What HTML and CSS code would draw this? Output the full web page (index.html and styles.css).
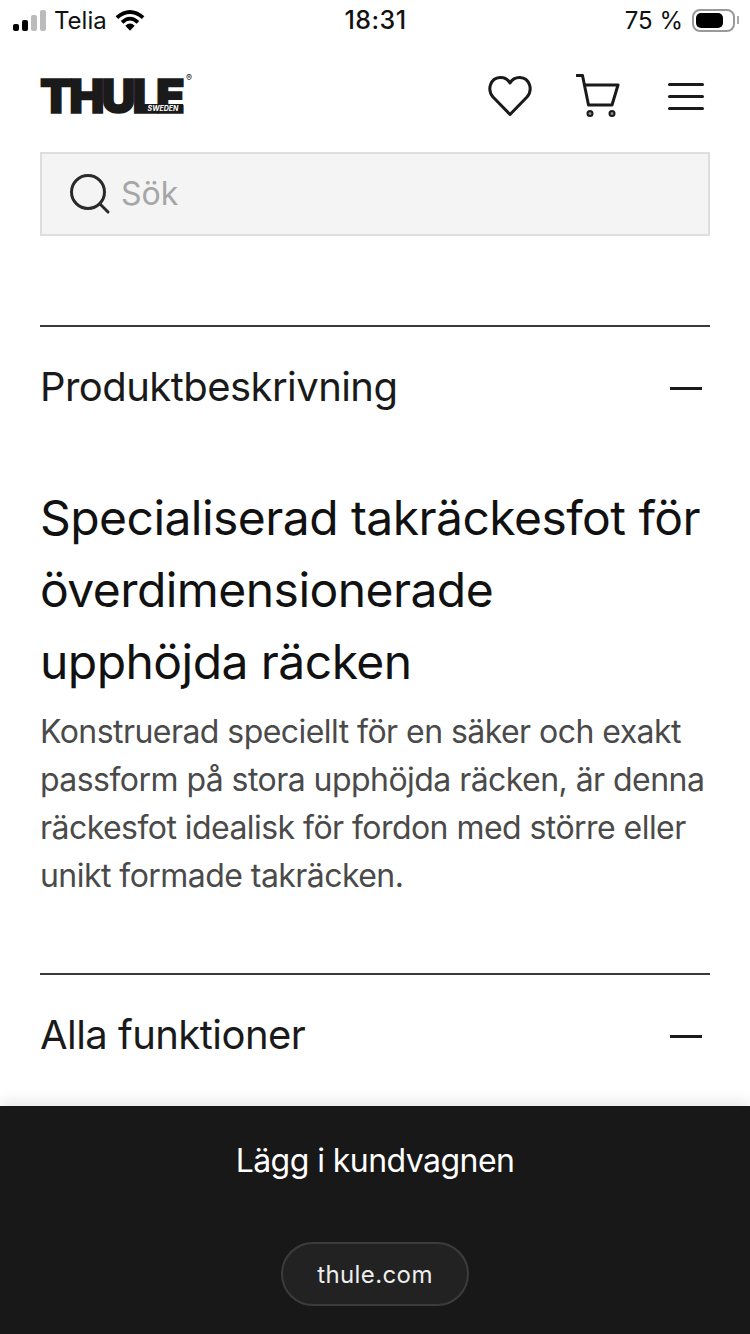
FILE: index.html
```html
<!DOCTYPE html>
<html lang="sv">
<head>
    <meta charset="UTF-8">
    <meta name="viewport" content="width=device-width, initial-scale=1.0">
    <title>Thule</title>
    <link rel="stylesheet" href="styles.css">
</head>
<body>
    <div class="status-bar">
        <div class="status-left">
            <svg class="signal" width="34" height="22" viewBox="0 0 34 22">
                <rect x="0" y="14" width="6" height="7" rx="2" fill="#000"/>
                <rect x="9" y="10" width="6" height="11" rx="2" fill="#000"/>
                <rect x="18" y="5" width="6" height="16" rx="2" fill="#bbb"/>
                <rect x="27" y="0" width="6" height="21" rx="2" fill="#bbb"/>
            </svg>
            <span class="carrier">Telia</span>
            <svg class="wifi" width="30" height="23" viewBox="0 0 32 24">
                <path d="M2 9 Q16 -3 30 9" fill="none" stroke="#000" stroke-width="4"/>
                <path d="M7.5 14 Q16 6 24.5 14" fill="none" stroke="#000" stroke-width="4"/>
                <path d="M11 17.5 Q16 13 21 17.5 L16 23 Z" fill="#000"/>
            </svg>
        </div>
        <div class="status-time">18:31</div>
        <div class="status-right">
            <span class="battery-text">75 %</span>
            <div class="battery"><div class="battery-level"></div></div>
            <div class="battery-cap"></div>
        </div>
    </div>

    <header class="site-header">
        <div class="logo">
            <span class="logo-word">THULE</span>
            <span class="logo-sub">SWEDEN</span>
            <span class="logo-reg">®</span>
        </div>
        <div class="header-icons">
            <svg class="icon-heart" width="44" height="42" viewBox="0 0 44 42">
                <path d="M22 39.500 L5 22 C-1 15 2 3 12 2.500 C16.500 2.300 20 4.500 22 8 C24 4.500 27.500 2.300 32 2.500 C42 3 45 15 39 22 Z" fill="none" stroke="#1a1a1a" stroke-width="3" stroke-linejoin="round"/>
            </svg>
            <svg class="icon-cart" width="44" height="44" viewBox="0 0 44 44">
                <path d="M1 1.500 H6.500 L12.500 31 H36 L42 11 H8.500" fill="none" stroke="#1a1a1a" stroke-width="3" stroke-linejoin="round" stroke-linecap="round"/>
                <circle cx="14" cy="39.500" r="2.500" fill="#1a1a1a" fill-opacity="0.5" stroke="#1a1a1a" stroke-width="2"/>
                <circle cx="36" cy="39.500" r="2.500" fill="#1a1a1a" fill-opacity="0.5" stroke="#1a1a1a" stroke-width="2"/>
            </svg>
            <div class="icon-menu"><span></span><span></span><span></span></div>
        </div>
    </header>

    <div class="search-box">
        <svg width="42" height="42" viewBox="0 0 42 42">
            <circle cx="19" cy="19" r="16.500" fill="none" stroke="#2a2a2a" stroke-width="3"/>
            <path d="M31 31 L39 39" stroke="#2a2a2a" stroke-width="3" stroke-linecap="round"/>
        </svg>
        <span class="search-placeholder">Sök</span>
    </div>

    <section class="accordion description">
        <div class="accordion-head">
            <h2>Produktbeskrivning</h2>
            <span class="minus"></span>
        </div>
        <h1>Specialiserad takräckesfot för överdimensionerade upphöjda räcken</h1>
        <p>Konstruerad speciellt för en säker och exakt passform på stora upphöjda räcken, är denna räckesfot idealisk för fordon med större eller unikt formade takräcken.</p>
    </section>

    <section class="accordion">
        <div class="accordion-head">
            <h2>Alla funktioner</h2>
            <span class="minus"></span>
        </div>
    </section>

    <div class="bottom-bar">
        <div class="add-to-cart">Lägg i kundvagnen</div>
        <div class="url-pill">thule.com</div>
    </div>
</body>
</html>
```

FILE: styles.css
```css
html, body {
    margin: 0;
    padding: 0;
}

body {
    width: 750px;
    height: 1334px;
    overflow: hidden;
    position: relative;
    background-color: #fff;
    font-family: Inter, "Liberation Sans", sans-serif;
    color: #1a1a1a;
}

.status-bar {
    height: 40px;
    display: grid;
    grid-template-columns: 1fr auto 1fr;
    align-items: center;
    padding: 0 11px 0 13px;
    font-size: 24px;
    color: #111;
}

.status-left {
    display: flex;
    align-items: center;
}

.signal {
    margin-top: 1px;
}

.carrier {
    margin-left: 7px;
}

.wifi {
    margin-left: 8px;
}

.status-time {
    font-size: 25px;
    font-weight: 500;
    letter-spacing: 0.5px;
    margin-right: 1px;
}

.status-right {
    display: flex;
    align-items: center;
    justify-content: flex-end;
}

.battery-text {
    margin-right: 9px;
}

.battery {
    width: 39px;
    height: 19px;
    border: 2px solid #999;
    border-radius: 8px;
}

.battery-level {
    width: 27px;
    height: 15px;
    margin: 2px;
    background-color: #000;
    border-radius: 5px;
}

.battery-cap {
    width: 2px;
    height: 8px;
    margin-left: 2px;
    background-color: #aaa;
}

.site-header {
    display: flex;
    justify-content: space-between;
    align-items: center;
    height: 112px;
    padding: 0 46px 0 40px;
}

.logo {
    position: relative;
    width: 154px;
    height: 40px;
    line-height: 40px;
}

.logo-word {
    font-weight: 900;
    font-size: 47px;
    letter-spacing: -3px;
    color: #1a1a1a;
    -webkit-text-stroke: 1.5px #1a1a1a;
}

.logo-sub {
    position: absolute;
    left: 103px;
    top: 28px;
    width: 40px;
    height: 9px;
    background-color: #1a1a1a;
    color: #fff;
    font-size: 7px;
    line-height: 9px;
    font-weight: 700;
    font-style: italic;
    text-align: center;
}

.logo-reg {
    position: absolute;
    left: 146px;
    top: -4px;
    font-size: 9px;
    line-height: 12px;
}

.header-icons {
    display: flex;
    align-items: center;
}

.icon-heart {
    margin-right: 44px;
}

.icon-cart {
    margin-right: 48px;
}

.icon-menu {
    width: 36px;
    display: flex;
    flex-direction: column;
    gap: 9px;
}

.icon-menu span {
    height: 3px;
    background-color: #1a1a1a;
    border-radius: 2px;
}

.search-box {
    display: flex;
    align-items: center;
    height: 84px;
    box-sizing: border-box;
    margin: 0 40px;
    padding-left: 27px;
    background-color: #f4f4f4;
    border: 2px solid #dedede;
}

.search-placeholder {
    margin-left: 10px;
    margin-bottom: 2px;
    font-size: 32px;
    color: #a6a6a6;
}

.accordion {
    margin: 0 40px;
    border-top: 2px solid #3a3a3a;
}

.description {
    margin-top: 89px;
    height: 646px;
}

.accordion-head {
    display: flex;
    justify-content: space-between;
    align-items: center;
    height: 122px;
}

.accordion-head h2 {
    margin: 0 0 3px;
    font-size: 40px;
    letter-spacing: -0.55px;
    font-weight: 400;
    color: #1a1a1a;
}

.minus {
    width: 32px;
    height: 3px;
    margin-right: 8px;
    background-color: #1a1a1a;
}

.accordion h1 {
    margin: 33px 0 0;
    font-size: 48px;
    letter-spacing: -0.55px;
    line-height: 72px;
    font-weight: 400;
    color: #111;
}

.accordion p {
    margin: 10px 0 0;
    font-size: 32px;
    letter-spacing: -0.55px;
    line-height: 48px;
    color: #4a4a4a;
}

.bottom-bar {
    position: absolute;
    left: 0;
    right: 0;
    top: 1106px;
    height: 228px;
    background-color: #181818;
    box-shadow: 0 -6px 12px rgba(0, 0, 0, 0.08);
    display: flex;
    flex-direction: column;
    align-items: center;
}

.add-to-cart {
    margin-top: 35px;
    height: 40px;
    line-height: 40px;
    font-size: 32px;
    letter-spacing: -0.55px;
    color: #fff;
}

.url-pill {
    margin-top: 61px;
    width: 188px;
    height: 64px;
    box-sizing: border-box;
    line-height: 62px;
    text-align: center;
    font-size: 24px;
    letter-spacing: 0.4px;
    color: #eee;
    background-color: #222;
    border: 2px solid #3c3c3c;
    border-radius: 32px;
}
```
